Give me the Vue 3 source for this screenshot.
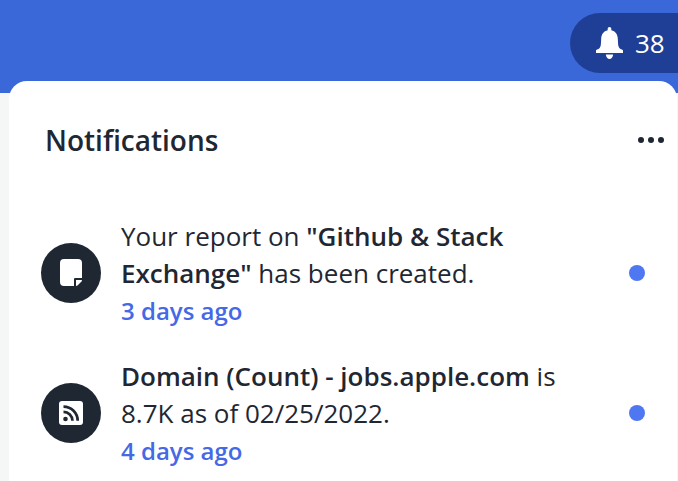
<template>
  <div class="page">
    <header class="topbar">
      <div class="bell-pill">
        <svg class="bell" viewBox="0 0 27 32" width="27" height="32">
          <path d="M13.500 0c1 0 1.800.8 1.800 1.800v1.500c4.200.8 6.300 4.200 6.500 8.300l.3 5.400c.1 2.200.8 3.700 2.100 4.800.9.700 2.800 1 2.800 1.700v2.500H0v-2.500c0-.7 1.900-1 2.800-1.700 1.300-1.100 2-2.600 2.100-4.800l.3-5.400c.2-4.100 2.300-7.500 6.500-8.300V1.800c0-1 .8-1.800 1.800-1.800z" fill="#fff" />
          <path d="M9.800 27.500h7.400c-.3 2.600-1.800 4.500-3.700 4.500s-3.400-1.900-3.700-4.500z" fill="#fff" />
        </svg>
        <span class="count">38</span>
      </div>
    </header>

    <section class="card">
      <div class="card-head">
        <h2>Notifications</h2>
        <div class="more"><i /><i /><i /></div>
      </div>

      <ul class="list">
        <li v-for="item in items" :key="item.id" class="row">
          <span class="avatar">
            <svg v-if="item.icon === 'note'" viewBox="0 0 22 27" width="22" height="27">
              <path d="M4 0h14a4 4 0 0 1 4 4v15h-7a1 1 0 0 0-1 1v7H4a4 4 0 0 1-4-4V4a4 4 0 0 1 4-4z" fill="#fff" />
              <path d="M16 21h6l-.5 1.500-4 4-1.500.5z" fill="#fff" />
            </svg>
            <svg v-else viewBox="0 0 24 24" width="24" height="24">
              <rect width="24" height="24" rx="3" fill="#fff" />
              <circle cx="6.500" cy="18" r="2.300" fill="#1f2733" />
              <path d="M4.500 10.800a9 9 0 0 1 9 9M4.500 5.600a14.200 14.200 0 0 1 14.200 14.200" fill="none" stroke="#1f2733" stroke-width="2.700" />
            </svg>
          </span>
          <div class="body">
            <p class="msg">
              <template v-for="(part, i) in item.parts" :key="i">
                <strong v-if="part.bold">{{ part.text }}</strong>
                <template v-else>{{ part.text }}</template>
              </template>
            </p>
            <p class="time">{{ item.time }}</p>
          </div>
          <span class="dot" />
        </li>
      </ul>
    </section>
  </div>
</template>

<script setup>
const items = [
  {
    id: 1,
    icon: 'note',
    parts: [
      { text: 'Your report on ' },
      { text: '"Github & Stack Exchange"', bold: true },
      { text: ' has been created.' },
    ],
    time: '3 days ago',
  },
  {
    id: 2,
    icon: 'rss',
    parts: [
      { text: 'Domain (Count) - jobs.apple.com', bold: true },
      { text: ' is 8.7K as of 02/25/2022.' },
    ],
    time: '4 days ago',
  },
]
</script>

<style>
html,
body {
  margin: 0;
  overflow: hidden;
}
</style>

<style scoped>
.page {
  background: #f5f6f6;
  font-family: 'Open Sans', 'Noto Sans', sans-serif;
  height: 481px;
  overflow: hidden;
  width: 678px;
}

.topbar {
  background: #3b68d8;
  box-sizing: border-box;
  display: flex;
  height: 93px;
  justify-content: flex-end;
  padding-top: 13px;
}

.bell-pill {
  align-items: center;
  background: #1f3f97;
  border-radius: 30px 0 0 30px;
  box-sizing: border-box;
  color: #fff;
  display: flex;
  gap: 12px;
  height: 60px;
  padding-left: 26px;
  width: 108px;
}

.bell {
  flex: none;
}

.count {
  font-size: 26px;
}

.card {
  background: #fff;
  border-radius: 18px 18px 0 0;
  box-sizing: border-box;
  height: 400px;
  margin: -12px 1px 0 9px;
  padding-top: 40px;
}

.card-head {
  align-items: center;
  display: flex;
  height: 38px;
  justify-content: space-between;
  padding: 0 13px 0 36px;
}

h2 {
  color: #1f2733;
  font-size: 28px;
  font-weight: 600;
  margin: 0;
}

.more {
  display: flex;
  gap: 4px;
}

.more i {
  background: #1f2733;
  border-radius: 50%;
  height: 6px;
  width: 6px;
}

.list {
  list-style: none;
  margin: 0;
  padding: 58px 0 0 32px;
}

.row {
  align-items: center;
  display: flex;
  height: 111px;
  margin-bottom: 29px;
}

.avatar {
  align-items: center;
  background: #1f2733;
  border-radius: 50%;
  display: flex;
  flex: none;
  height: 60px;
  justify-content: center;
  margin-right: 20px;
  width: 60px;
}

.body {
  padding-top: 1px;
  width: 508px;
}

.msg,
.time {
  font-size: 26px;
  line-height: 37px;
  margin: 0;
}

.msg {
  color: #1f2733;
  max-width: 450px;
}

.msg strong {
  font-weight: 600;
}

.time {
  color: #4569e6;
  font-size: 24px;
  font-weight: 600;
}

.dot {
  background: #5077f2;
  border-radius: 50%;
  flex: none;
  height: 16px;
  width: 16px;
}
</style>
